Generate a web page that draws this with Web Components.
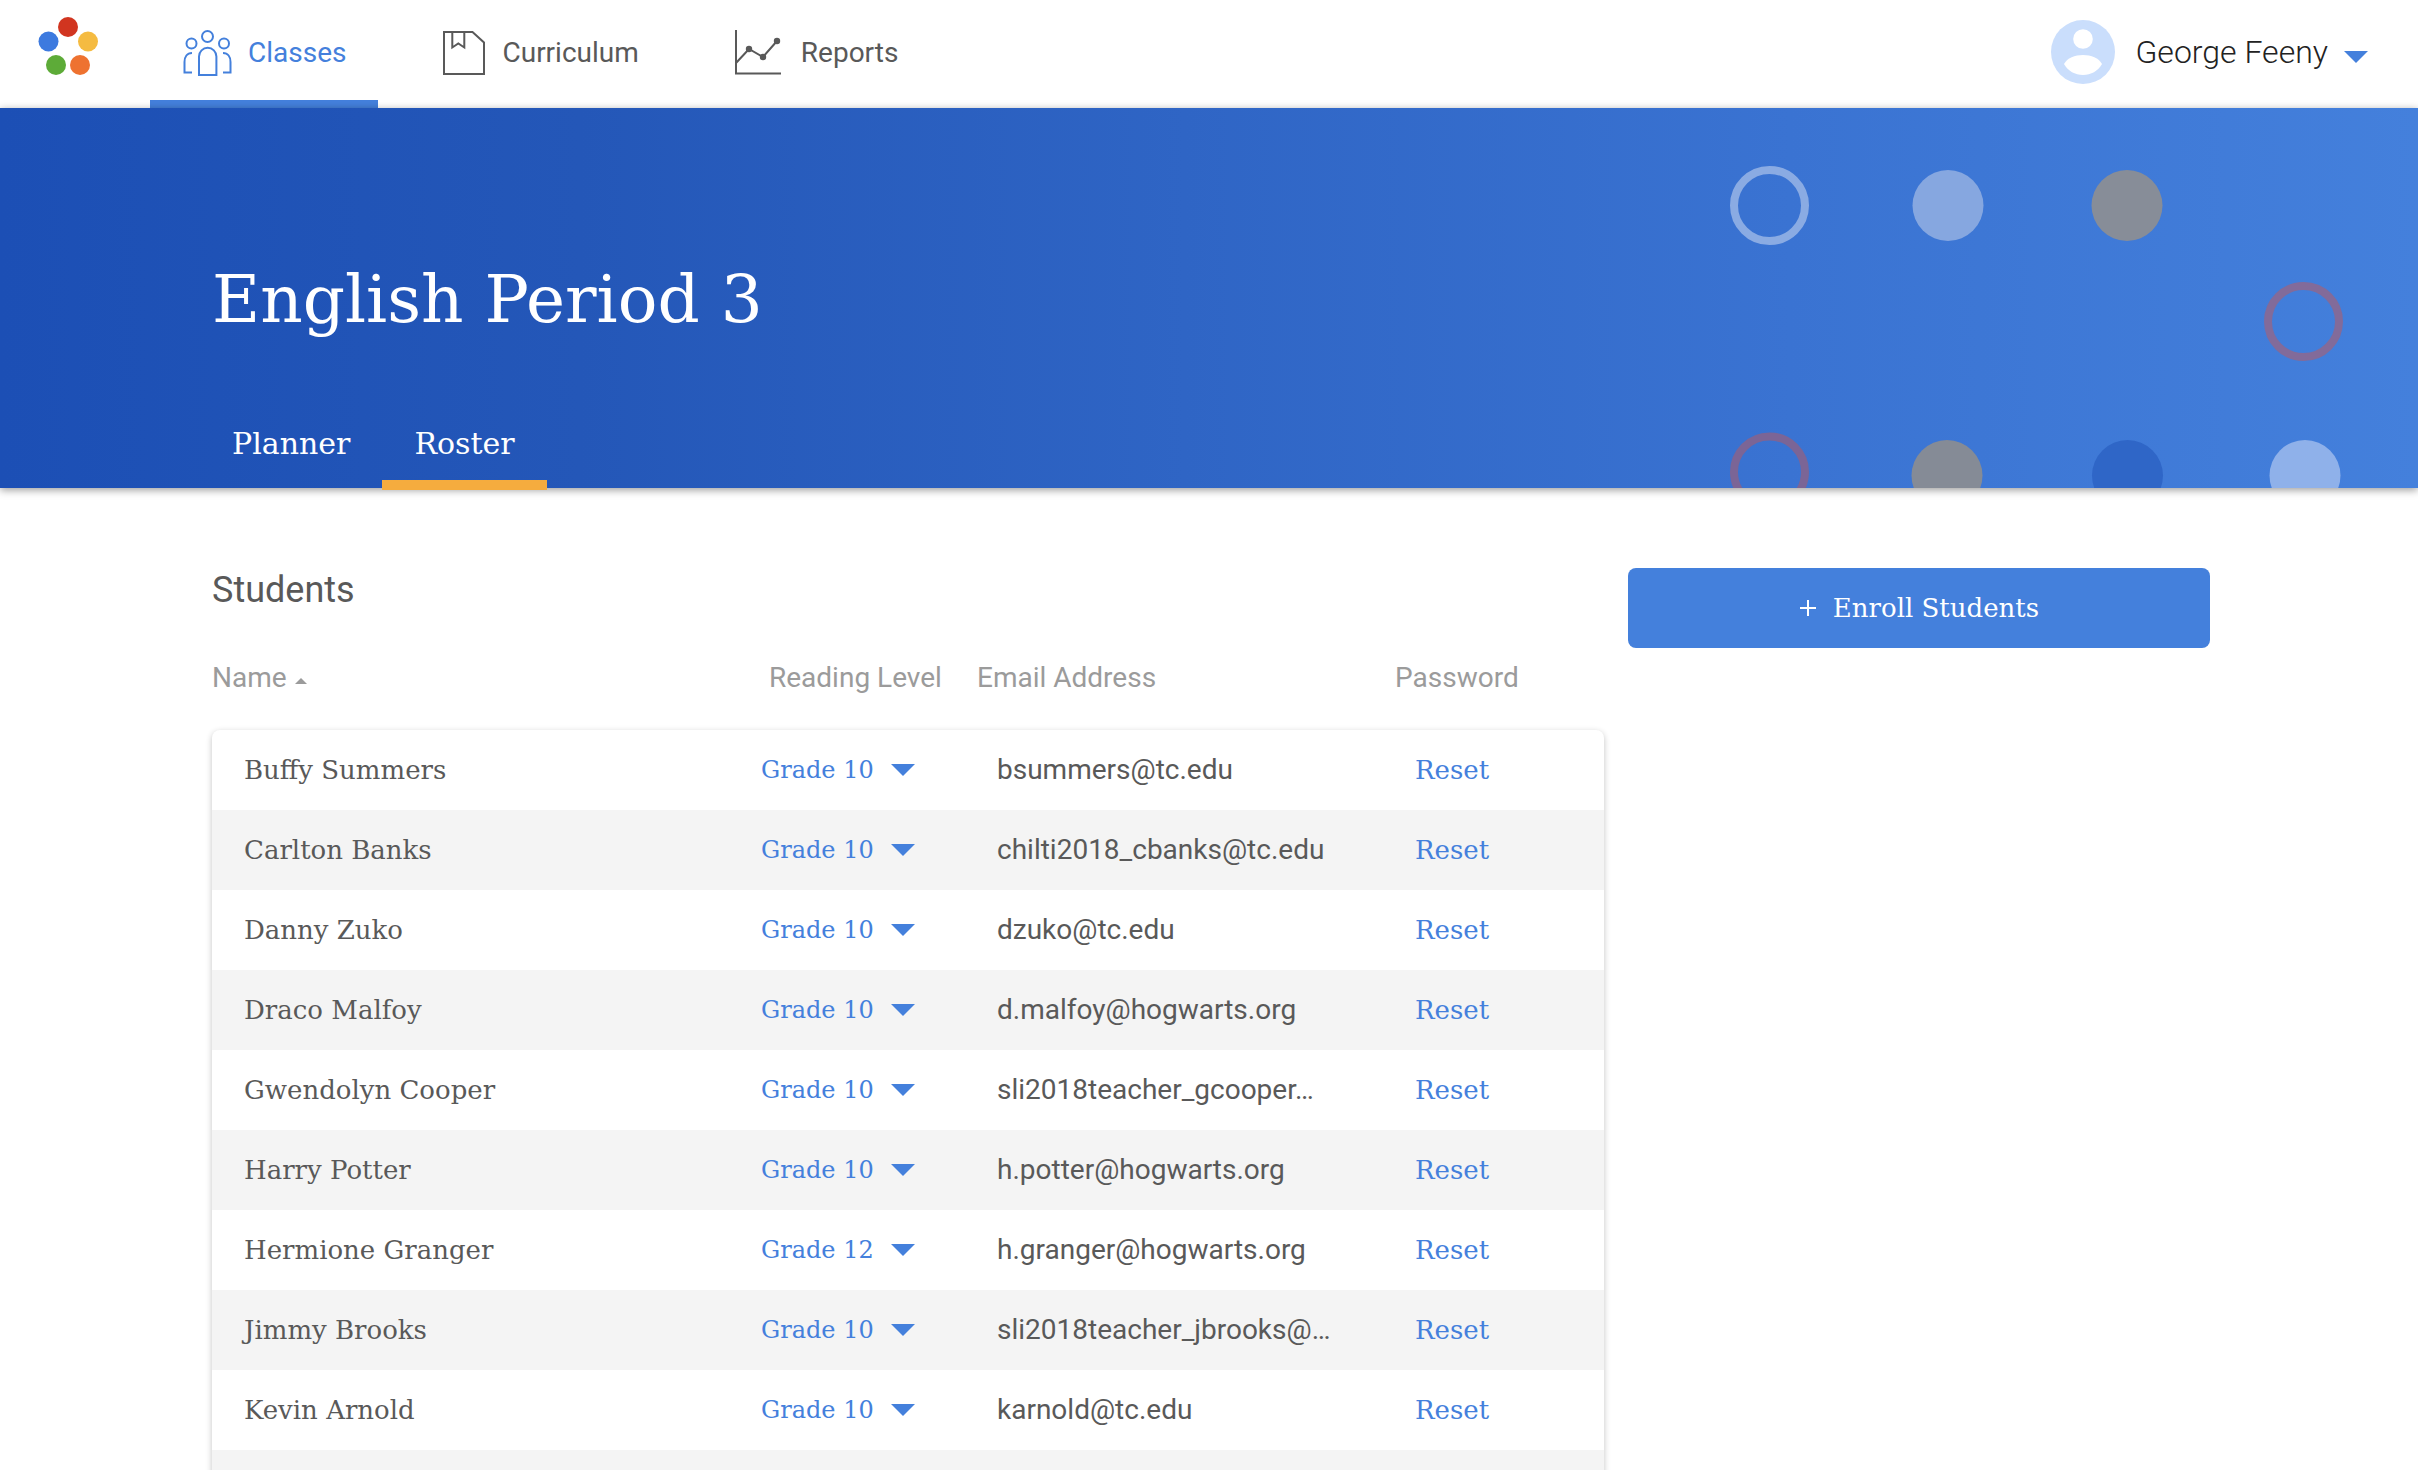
<!DOCTYPE html>
<html lang="en">
<head>
<meta charset="utf-8">
<title>English Period 3 - Roster</title>
<style>
  html, body { margin: 0; height: 100%; background: #fff; }
  body {
    --sans: Roboto, "Liberation Sans", sans-serif;
    --slab: "DejaVu Serif", serif;
    --blue: #4480dc;
    --ink: #595959;
    font-family: var(--sans); font-size: 28px; line-height: 40px; color: var(--ink);
  }
</style>
</head>
<body>
<roster-app></roster-app>
<script>
  function define(name, html, setup) {
    const template = document.createElement('template');
    template.innerHTML = html;
    customElements.define(name, class extends HTMLElement {
      connectedCallback() {
        if (this.shadowRoot) return;
        const root = this.attachShadow({ mode: 'open' });
        root.append(template.content.cloneNode(true));
        if (setup) setup(this, root);
      }
    });
  }

  define('brand-logo', `
    <style>:host{display:block} a,svg{display:block}</style>
    <a href="#" aria-label="Home"><svg width="60" height="58" viewBox="38 17 60 58">
      <circle cx="68" cy="27" r="10" fill="#d13520"/><circle cx="88" cy="41.5" r="10" fill="#f5bb41"/>
      <circle cx="80" cy="65" r="10" fill="#ee7230"/><circle cx="56" cy="65" r="10" fill="#5dab38"/>
      <circle cx="48.5" cy="41.5" r="10" fill="#3d7adf"/>
    </svg></a>`);

  define('nav-item', `
    <style>
      :host{display:block;color:var(--ink)}
      :host([active]){color:var(--blue)}
      a{box-sizing:border-box;display:flex;align-items:center;gap:16px;height:108px;padding:8px 32px 2px;border-bottom:8px solid transparent;color:inherit;text-decoration:none}
      :host([active]) a{border-bottom-color:var(--blue)}
      ::slotted(svg){display:block;flex:none}
    </style>
    <a href="#"><slot name="icon"></slot><slot></slot></a>`);

  define('user-menu', `
    <style>
      :host{display:block}
      button{display:flex;align-items:center;gap:20px;padding:0;border:0;background:none;font:300 32px/40px var(--sans);color:#222}
      .caret{margin-left:-4px}
      svg{display:block}
    </style>
    <button type="button">
      <svg width="64" height="64" viewBox="0 0 64 64"><circle cx="32" cy="32" r="32" fill="#cadefc"/><circle cx="32" cy="19" r="9.8" fill="#fff"/><path d="M13 44C16 38 24 35 32 35S48 38 51 44C47 51 40 55 32 55S17 51 13 44Z" fill="#fff"/></svg>
      <slot></slot>
      <svg class="caret" width="24" height="22" viewBox="0 0 24 22"><path d="M0 10H24L12 22Z" fill="#4480dc"/></svg>
    </button>`);

  define('app-header', `
    <style>
      :host{display:flex;align-items:center;justify-content:space-between;height:108px;padding:0 50px 0 38px;background:#fff}
      .left{display:flex;align-items:center;gap:52px}
      nav{display:flex;gap:32px}
      brand-logo{margin-bottom:16px}
      user-menu{margin-bottom:4px}
    </style>
    <div class="left">
      <brand-logo></brand-logo>
      <nav>
        <nav-item active>
          <svg slot="icon" width="50" height="50" viewBox="182 27 50 50" fill="none" stroke="currentColor" stroke-width="2">
            <circle cx="207.5" cy="35.5" r="5.5"/><circle cx="191.5" cy="42.5" r="5"/><circle cx="224" cy="42.5" r="5"/>
            <path d="M199 74V55.5a8.7 8.7 0 0 1 17.400 0V74Z"/><path d="M192 52c-5 0-7.500 4-7.500 9v10.500h7.500M223 52c5 0 7.500 4 7.500 9v10.500H223"/>
          </svg>Classes</nav-item>
        <nav-item>
          <svg slot="icon" width="44" height="50" viewBox="442 28 44 50" fill="none" stroke="currentColor" stroke-width="2">
            <path d="M444 32H472.500L484 42.500V74H444Z"/><path d="M452.300 32V47.500L458.300 43.500L464.300 47.500V32"/>
          </svg>Curriculum</nav-item>
        <nav-item>
          <svg slot="icon" width="50" height="50" viewBox="735 28 50 50" fill="none" stroke="currentColor" stroke-width="2">
            <path d="M736 30V73.500H781M736 63L749 49L763 57L777 41"/><g fill="currentColor" stroke="none"><circle cx="749" cy="49" r="3.200"/><circle cx="763" cy="57" r="3.200"/><circle cx="777" cy="41" r="3.200"/></g>
          </svg>Reports</nav-item>
      </nav>
    </div>
    <user-menu>George Feeny</user-menu>`);

  define('banner-tab', `
    <style>
      :host{display:block}
      a{display:block;padding:12px 32px 16px;border-bottom:10px solid transparent;font:400 30px/40px var(--slab);color:#fff;text-decoration:none}
      :host([active]) a{border-bottom-color:#f5ac3e}
    </style>
    <a href="#"><slot></slot></a>`);

  define('class-banner', `
    <style>
      :host{display:block;position:relative;height:380px;background:linear-gradient(90deg,#1c4fb5,#2457b8 24%,#3a73d2 74%,#4480dc);box-shadow:0 2px 8px rgba(0,0,0,.4)}
      .dots{position:absolute;right:0;top:0;display:block}
      .content{position:relative;display:flex;flex-direction:column;justify-content:space-between;box-sizing:border-box;height:382px;padding:144px 212px 0}
      h1{margin:0;font:300 66px/96px var(--slab);color:#fff}
      nav{display:flex;margin-left:-12px}
    </style>
    <svg class="dots" width="718" height="380" viewBox="1700 108 718 380">
      <circle cx="1769.500" cy="205.500" r="35.500" fill="none" stroke="#8aabe3" stroke-width="8"/>
      <circle cx="1948" cy="205.500" r="35.500" fill="#86a7e0"/>
      <circle cx="2127" cy="205.500" r="35.500" fill="#878d98"/>
      <circle cx="2303.500" cy="321.500" r="35.500" fill="none" stroke="#826b9a" stroke-width="8"/>
      <circle cx="1769.500" cy="472" r="35.500" fill="none" stroke="#7b6596" stroke-width="8"/>
      <circle cx="1947" cy="475.500" r="35.500" fill="#858b96"/>
      <circle cx="2127.500" cy="475.500" r="35.500" fill="#2f66c7"/>
      <circle cx="2305" cy="475.500" r="35.500" fill="#8fb1ea"/>
    </svg>
    <div class="content">
      <h1>English Period 3</h1>
      <nav><banner-tab>Planner</banner-tab><banner-tab active>Roster</banner-tab></nav>
    </div>`);

  define('grade-select', `
    <style>
      :host{display:flex;align-items:center}
      label{display:flex;align-items:center;gap:16px;color:var(--blue)}
      select{appearance:none;margin:0;padding:0;border:0;background:none;font:400 24px/40px var(--slab);color:inherit}
      svg{display:block}
    </style>
    <label><select aria-label="Reading Level"><option>Grade 10</option><option>Grade 12</option></select>
    <svg width="26" height="12" viewBox="0 0 26 12"><path d="M1 0H25L13 12Z" fill="currentColor"/></svg></label>`,
    (el, root) => { root.querySelector('select').value = el.getAttribute('value'); });

  define('student-table', `
    <style>
      :host{display:block}
      h2{margin:0;font:400 36px/48px var(--sans)}
      table{display:block;margin-top:44px}
      thead{display:block;padding-bottom:32px}
      tr{display:grid;grid-template-columns:557fr 208fr 418fr 209fr;align-items:center}
      th{padding:0;font-weight:400;text-align:left;color:#9b9b9b;white-space:nowrap}
      th svg{margin-left:8px;vertical-align:3px}
      tbody{display:block;border-radius:8px;overflow:hidden;box-shadow:0 2px 6px rgba(0,0,0,.24)}
      tbody tr{height:80px}
      tbody tr:nth-child(even){background:#f4f4f4}
      td{padding:0 0 0 20px;white-space:nowrap}
      td:first-child{padding-left:32px;font-family:var(--slab);font-size:26px}
      td.grade{padding:0;margin-left:-8px}
      button{padding:0;border:0;background:none;font:400 26px/40px var(--slab);color:var(--blue)}
    </style>
    <h2>Students</h2>
    <table>
      <thead><tr><th aria-sort="ascending">Name<svg width="12" height="6" viewBox="0 0 12 6"><path d="M0 6H12L6 0Z" fill="currentColor"/></svg></th><th>Reading Level</th><th>Email Address</th><th>Password</th></tr></thead>
      <tbody></tbody>
    </table>`, (el, root) => {
      const students = [
        ['Buffy Summers', 'Grade 10', 'bsummers@tc.edu'],
        ['Carlton Banks', 'Grade 10', 'chilti2018_cbanks@tc.edu'],
        ['Danny Zuko', 'Grade 10', 'dzuko@tc.edu'],
        ['Draco Malfoy', 'Grade 10', 'd.malfoy@hogwarts.org'],
        ['Gwendolyn Cooper', 'Grade 10', 'sli2018teacher_gcooper…'],
        ['Harry Potter', 'Grade 10', 'h.potter@hogwarts.org'],
        ['Hermione Granger', 'Grade 12', 'h.granger@hogwarts.org'],
        ['Jimmy Brooks', 'Grade 10', 'sli2018teacher_jbrooks@…'],
        ['Kevin Arnold', 'Grade 10', 'karnold@tc.edu']
      ];
      root.querySelector('tbody').innerHTML = students.map(([name, grade, email]) =>
        `<tr><td>${name}</td><td class="grade"><grade-select value="${grade}"></grade-select></td><td>${email}</td><td><button type="button">Reset</button></td></tr>`
      ).join('') + '<tr></tr>';
    });

  define('enroll-button', `
    <style>
      :host{display:block}
      button{display:flex;align-items:center;justify-content:center;gap:16px;width:100%;height:80px;padding:0;border:0;border-radius:8px;background:var(--blue);font:400 26px/40px var(--slab);color:#fff}
    </style>
    <button type="button"><svg width="18" height="18" viewBox="0 0 18 18"><path d="M9 1V17M1 9H17" stroke="#fff" stroke-width="2"/></svg><slot></slot></button>`);

  define('roster-app', `
    <style>
      :host{display:flex;flex-direction:column;height:100vh;overflow:hidden}
      app-header,class-banner{flex:none}
      main{display:grid;grid-template-columns:minmax(0,1392fr) minmax(0,582fr);align-items:start;gap:24px;flex:1;min-height:0;padding:78px 208px 0 212px}
      enroll-button{margin-top:2px}
    </style>
    <app-header></app-header>
    <class-banner></class-banner>
    <main><student-table></student-table><enroll-button>Enroll Students</enroll-button></main>`);
</script>
</body>
</html>
